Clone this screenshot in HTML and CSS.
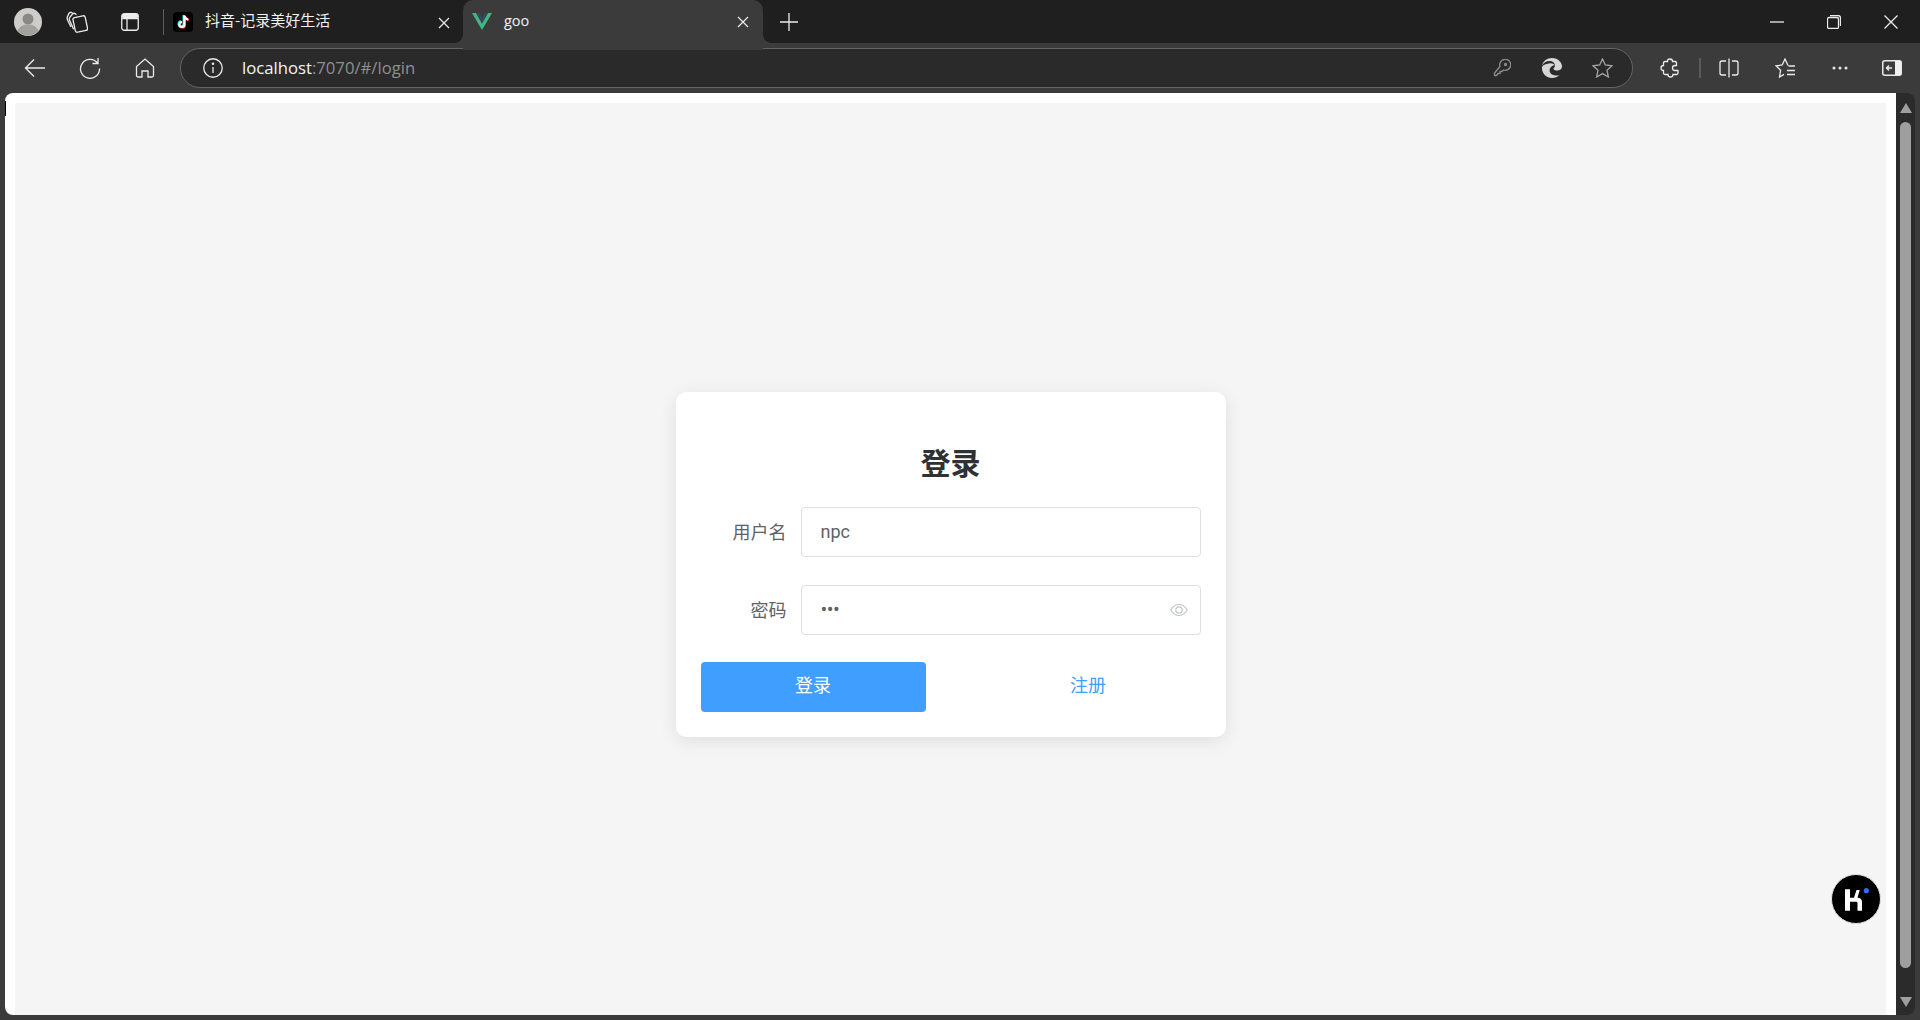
FILE: index.html
```html
<!DOCTYPE html>
<html lang="zh-CN">
<head>
<meta charset="utf-8">
<title>goo</title>
<link rel="stylesheet" href="styles.css">
</head>
<body>
<div class="browser">
  <header class="tabstrip">
    <div class="slot slot-avatar">
      <svg width="28" height="28" viewBox="0 0 28 28"><circle cx="14" cy="14" r="14" fill="#cfcdca"/><circle cx="14" cy="11" r="5.5" fill="#8b8985"/><path d="M3.5 23c2-5 6-6.5 10.500-6.500s8.500 1.500 10.500 6.500a14 14 0 0 1-21 0z" fill="#a3a19d"/></svg>
    </div>
    <div class="slot slot-coll">
      <svg class="ico" width="22" height="22" viewBox="0 0 22 22"><rect x="8" y="5.500" width="12.500" height="15" rx="2" transform="rotate(-12 14.300 13)"/><path d="M10.500 3.800 9.300 2.800C8.300 2 7.200 2.200 6.500 3L3.800 6.300c-.8 1-.8 2-.2 3l4 9"/><path d="M6.500 1.800 5.300 1.400C4.300 1.100 3.500 1.500 3 2.400L1.300 6c-.4 1-.3 2 .2 3l3.500 7"/></svg>
    </div>
    <div class="slot slot-tabs">
      <svg class="ico" width="18" height="18" viewBox="0 0 18 18"><rect x=".75" y=".75" width="16.500" height="16.500" rx="2.500"/><path d="M6 6v11M1 5.500h16" /><rect x="1" y="1" width="16" height="4" rx="1.500" class="fillw"/></svg>
    </div>
    <div class="tab-sep"></div>
    <div class="tab">
      <svg class="favicon" width="20" height="20" viewBox="0 0 20 20"><rect width="20" height="20" rx="4" fill="#000"/><path d="M11.400 3.500v9a2.500 2.500 0 1 1-2.500-2.500" fill="none" stroke="#25f4ee" stroke-width="2.300" transform="translate(-.7 -.5)"/><path d="M11.400 3.500v9a2.500 2.500 0 1 1-2.500-2.500M11.400 3.700c.3 2.200 1.700 3.500 3.800 3.700" fill="none" stroke="#fe2c55" stroke-width="2.300" transform="translate(.6 .5)"/><path d="M11.400 3.500v9a2.500 2.500 0 1 1-2.500-2.500M11.400 3.700c.3 2.200 1.700 3.500 3.800 3.700" fill="none" stroke="#fff" stroke-width="2.100"/></svg>
      <span class="tab-title">抖音-记录美好生活</span>
      <svg class="tab-close" width="12" height="12" viewBox="0 0 12 12"><path d="M1 1l10 10M11 1 1 11"/></svg>
    </div>
    <div class="tab tab-active">
      <svg class="favicon" width="20" height="17" viewBox="0 0 20 17"><path d="M0 0h4l6 10.500L16 0h4L10 17z" fill="#41b883"/><path d="M4 0h3.300L10 4.700 12.700 0H16l-6 10.500z" fill="#34495e"/></svg>
      <span class="tab-title tab-title-latin">goo</span>
      <svg class="tab-close" width="12" height="12" viewBox="0 0 12 12"><path d="M1 1l10 10M11 1 1 11"/></svg>
    </div>
    <div class="slot slot-plus">
      <svg class="ico" width="18" height="18" viewBox="0 0 18 18"><path d="M9 0v18M0 9h18"/></svg>
    </div>
    <div class="spacer"></div>
    <div class="slot slot-win"><svg class="ico" width="14" height="2" viewBox="0 0 14 2"><path d="M0 1h14"/></svg></div>
    <div class="slot slot-win"><svg class="ico" width="14" height="14" viewBox="0 0 14 14"><rect x=".5" y="2.500" width="11" height="11" rx="1.500"/><path d="M3 .5h8a2.500 2.500 0 0 1 2.500 2.500v8"/></svg></div>
    <div class="slot slot-win slot-win-last"><svg class="ico" width="14" height="14" viewBox="0 0 14 14"><path d="M.5.5l13 13M13.500.5l-13 13"/></svg></div>
  </header>

  <nav class="toolbar">
    <div class="slot slot-nav"><svg class="ico" width="22" height="20" viewBox="0 0 22 20"><path d="M21 10H1.500M10 1.500 1.500 10l8.500 8.500"/></svg></div>
    <div class="slot slot-nav"><svg class="ico" width="22" height="22" viewBox="0 0 22 22"><path d="M18.500 6A9.500 9.500 0 1 0 20.500 11.500M19 1v5.500h-5.500"/></svg></div>
    <div class="slot slot-nav"><svg class="ico" width="20" height="20" viewBox="0 0 20 20"><path d="M7 19H3a1.500 1.500 0 0 1-1.500-1.500V8.500L10 1l8.500 7.500v9A1.500 1.500 0 0 1 17 19h-4v-6H7z"/></svg></div>
    <div class="address">
      <div class="slot slot-info"><svg class="ico" width="20" height="20" viewBox="0 0 20 20"><circle cx="10" cy="10" r="9.250"/><path d="M10 9v6"/><circle cx="10" cy="5.800" r=".6"/></svg></div>
      <div class="url"><span class="url-host">localhost</span>:7070/#/login</div>
      <div class="spacer"></div>
      <div class="slot slot-addr"><svg class="ico ico-dim" width="18" height="18" viewBox="0 0 18 18"><path d="M7 7.500a5.500 5.500 0 1 1 3.500 3.500L9 12.500H7V14.500H5L3.500 16.500H1.500V14z"/><circle cx="12.500" cy="5.500" r="1"/></svg></div>
      <div class="slot slot-addr"><svg width="22" height="22" viewBox="0 0 22 22"><path d="M11 1c5 0 9.500 3.500 10 8 .3 3-2.300 4.500-5 4.500-2 0-3.500-.8-3.500-1.800 0-1 1.500-1.200 1.500-3C14 6 11.500 4 8.500 4 5 4 2.500 5.800 1 8.500 2 4 6 1 11 1z" fill="#d6d6d6"/><path d="M1 10c-.6 6.500 4.500 11 10 11 3 0 5.500-1 7.500-3-2 .8-5 1-7.500-.5-3-1.800-3-5.500-1-7.500 1.500-1.500 3-2 4-1.600C12.800 7 10.500 6 8 6.500 4.500 7 1.500 8 1 10z" fill="#d6d6d6"/></svg></div>
      <div class="slot slot-addr"><svg class="ico ico-dim2" width="21" height="20" viewBox="0 0 21 20"><path d="M10.500 1l2.800 6 6.700.8-5 4.500 1.400 6.700-5.900-3.400-5.900 3.400 1.400-6.700-5-4.500 6.700-.8z"/></svg></div>
    </div>
    <div class="slot slot-tool slot-ext"><svg class="ico" width="20" height="20" viewBox="0 0 20 20"><path d="M7.500 3.500C7.500 1.800 8.700 1 10 1s2.500.8 2.500 2.500H15A1.500 1.500 0 0 1 16.500 5v2.500H15a2.500 2.500 0 0 0 0 5h3V15a1.500 1.500 0 0 1-1.500 1.500H13c0 1.700-1.200 2.500-2.500 2.500S8 18.200 8 16.500H5A1.500 1.500 0 0 1 3.500 15v-2.500C1.800 12.500 1 11.300 1 10s.8-2.500 2.500-2.500V5A1.500 1.500 0 0 1 5 3.500z"/></svg></div>
    <div class="tool-sep"></div>
    <div class="slot slot-tool slot-split"><svg class="ico" width="20" height="20" viewBox="0 0 20 20"><path d="M7 3H3a2 2 0 0 0-2 2v10a2 2 0 0 0 2 2h4M13 3h4a2 2 0 0 1 2 2v10a2 2 0 0 1-2 2h-4M10 .5v19"/></svg></div>
    <div class="slot slot-tool slot-fav"><svg class="ico" width="21" height="20" viewBox="0 0 21 20"><path d="M13 7.500 10 1 7.200 7 1 7.800l4.600 4.500L4.500 19l4.500-2.600M13.500 8H20M12 12.500h8M12 16.500h8"/></svg></div>
    <div class="slot slot-tool slot-more"><svg width="16" height="4" viewBox="0 0 16 4"><circle cx="2" cy="2" r="1.500" fill="#e8e8e8"/><circle cx="8" cy="2" r="1.500" fill="#e8e8e8"/><circle cx="14" cy="2" r="1.500" fill="#e8e8e8"/></svg></div>
    <div class="slot slot-tool slot-side"><svg width="20" height="16" viewBox="0 0 20 16"><rect x=".75" y=".75" width="18.500" height="14.500" rx="2" fill="none" stroke="#e8e8e8" stroke-width="1.500"/><path d="M13 1h5a1 1 0 0 1 1 1v12a1 1 0 0 1-1 1h-5z" fill="#f0f0f0"/><path d="M10 8H4.500M7 5.500 4.500 8 7 10.500" fill="none" stroke="#f0f0f0" stroke-width="1.400"/></svg></div>
  </nav>

  <div class="viewport-row">
    <div class="viewport">
      <main class="page">
        <section class="card">
          <h1 class="title">登录</h1>
          <form class="form">
            <div class="row">
              <label class="label">用户名</label>
              <div class="input"><span class="value">npc</span></div>
            </div>
            <div class="row">
              <label class="label">密码</label>
              <div class="input">
                <span class="value value-pw">•••</span>
                <svg class="eye" width="18" height="14" viewBox="0 0 18 14"><path d="M.7 7C3 3.300 5.800 1.500 9 1.500s6 1.800 8.300 5.500C15 10.700 12.200 12.500 9 12.500S3 10.700.7 7z"/><circle cx="9" cy="7" r="3.200"/></svg>
              </div>
            </div>
            <div class="actions">
              <button class="btn btn-primary" type="button">登录</button>
              <button class="btn btn-link" type="button">注册</button>
            </div>
          </form>
        </section>
      </main>
    </div>
    <aside class="scrollbar">
      <span class="arrow arrow-up"></span>
      <span class="thumb"></span>
      <span class="arrow arrow-down"></span>
    </aside>
    <span class="caret"></span>
    <div class="float-badge">
      <svg width="26" height="26" viewBox="0 0 26 26"><path d="M2 3.300h5v8.400h4L13.500 4h3.200L14.500 11.700c2.500 0 4.500 1.300 4.500 4v9h-4.500v-7.500c0-1.200-.5-1.500-1.500-1.500H7v9H2z" fill="#fff"/><circle cx="23.300" cy="4.700" r="2.600" fill="#2f6bff"/></svg>
    </div>
  </div>
</div>
</body>
</html>
```

FILE: styles.css
```css
* { box-sizing: border-box; }
html, body { margin: 0; height: 100%; }
body {
  background: #3b3b3b;
  font-family: "Open Sans", "Noto Sans CJK SC", sans-serif;
  overflow: hidden;
}
.browser { display: flex; flex-direction: column; height: 1020px; }
.spacer { flex: 1; }
.slot { display: flex; align-items: center; justify-content: center; flex: none; }
.ico { fill: none; stroke: #ececec; stroke-width: 1.300; }
.ico .fillw { fill: #ececec; stroke: none; }
.ico-dim { stroke: #8e8e8e; }
.ico-dim2 { stroke: #a5a5a5; }

/* tab strip */
.tabstrip { display: flex; height: 43px; background: #1f1f1f; flex: none; }
.slot-avatar { width: 56px; }
.slot-coll { width: 42px; }
.slot-tabs { width: 64px; }
.tab-sep { width: 1px; height: 26px; margin: 9px 1px 0 1px; background: #5d5d5d; }
.tab {
  display: flex; align-items: center; width: 298px; height: 43px;
  padding: 0 13px 0 8px; color: #f2f2f2;
}
.favicon { flex: none; }
.tab-title {
  flex: 1; margin-left: 12px; margin-bottom: 5px; font-size: 15px;
  font-family: "Noto Sans CJK SC", sans-serif; white-space: nowrap;
}
.tab-title-latin { font-family: "Open Sans", sans-serif; font-size: 14.500px; margin-bottom: 0; }
.tab-close { flex: none; fill: none; stroke: #ededed; stroke-width: 1.200; }
.tab-active {
  position: relative; z-index: 1;
  width: 300px; height: 50px; padding: 0 14px 0 9px;
  background: #3b3b3b; border-radius: 10px 10px 0 0;
  align-items: flex-start;
}
.tab-active::before, .tab-active::after {
  content: ""; position: absolute; bottom: 7px; width: 8px; height: 8px;
}
.tab-active::before { left: -8px; background: radial-gradient(circle at 0 0, transparent 7.500px, #3b3b3b 8px); }
.tab-active::after { right: -8px; background: radial-gradient(circle at 100% 0, transparent 7.500px, #3b3b3b 8px); }
.tab-active .favicon { margin-top: 13px; }
.tab-active .tab-title { margin-top: 11px; line-height: 20px; }
.tab-active .tab-close { margin-top: 16px; }
.tabstrip > .tab:not(.tab-active) .tab-close { margin-top: 2px; }
.slot-plus { width: 52px; }
.slot-win { width: 57px; }
.slot-win-last { width: 58px; }

/* toolbar */
.toolbar { display: flex; align-items: center; height: 50px; padding-left: 7px; flex: none; background: #3b3b3b; }
.slot-nav { width: 55px; height: 40px; }
.address {
  display: flex; align-items: center; width: 1453px; height: 40px; margin-left: 8px;
  background: #2a2a2a; border: 1px solid #646464; border-radius: 20px; padding-right: 5px;
}
.slot-info { width: 62px; margin-right: -1px; padding-left: 2px; height: 38px; }
.url { font-size: 16.700px; margin-bottom: 2px; color: #8f8f8f; white-space: nowrap; }
.url-host { color: #f5f5f5; }
.slot-addr { width: 50px; height: 38px; }
.slot-tool { width: 48px; height: 40px; }
.slot-ext { margin-left: 13px; }
.tool-sep { width: 2px; height: 20px; margin-left: 5px; background: #5a5a5a; }
.slot-split { margin-left: 4px; }
.slot-fav { margin-left: 8px; }
.slot-more { margin-left: 7px; }
.slot-side { margin-left: 4px; }

/* viewport */
.viewport-row { display: flex; flex: 1; position: relative; padding: 0 5px 5px; min-height: 0; }
.viewport { flex: 1; background: #fff; border-radius: 8px 0 0 8px; padding: 10px 10px 0; min-width: 0; }
.page {
  display: flex; align-items: center; justify-content: center;
  height: 100%; padding-top: 11px; background: #f5f5f5;
}
.caret { position: absolute; left: 5px; top: 8px; width: 1px; height: 15px; background: #000; }

/* card */
.card {
  width: 550px; height: 345px; padding: 44px 25px 25px;
  background: #fff; border-radius: 10px;
  box-shadow: 0 4px 18px rgba(0, 0, 0, .09);
  font-family: "Roboto", "Noto Sans CJK SC", sans-serif;
}
.title {
  margin: 0 0 21px; font-size: 30px; line-height: 50px; font-weight: 700;
  text-align: center; color: #303133;
  font-family: "Noto Sans CJK SC", sans-serif;
}
.form { display: flex; flex-direction: column; }
.row { display: flex; align-items: center; height: 50px; margin-bottom: 28px; }
.row + .row { margin-bottom: 27px; }
.label { width: 100px; padding: 0 14px 2px 0; text-align: right; font-size: 18px; color: #606266; flex: none; }
.input {
  display: flex; align-items: center; justify-content: space-between;
  flex: 1; height: 50px; padding: 0 12px 0 19px;
  border: 1px solid #dcdfe6; border-radius: 4px; background: #fff;
  font-size: 18px; color: #606266;
}
.value { padding-bottom: 2px; }
.value-pw { font-size: 20px; letter-spacing: -.5px; }
.eye { fill: none; stroke: #c0c4cc; stroke-width: 1.200; }
.actions { display: flex; justify-content: space-between; }
.btn {
  width: 225px; height: 50px; border: 0; border-radius: 4px; padding: 0 0 6px;
  font: 18px "Roboto", "Noto Sans CJK SC", sans-serif;
}
.btn-primary { background: #409eff; color: #fff; }
.btn-link { background: transparent; color: #409eff; }

/* scrollbar */
.scrollbar {
  display: flex; flex-direction: column; align-items: center;
  width: 19px; background: #2b2b2b; border-radius: 0 8px 8px 0; padding: 10px 0 8px;
  flex: none;
}
.arrow { width: 0; height: 0; border-left: 6px solid transparent; border-right: 6px solid transparent; flex: none; }
.arrow-up { border-bottom: 10px solid #9f9f9f; }
.arrow-down { border-top: 10px solid #9f9f9f; }
.thumb { flex: 1; width: 11px; margin: 9px 0 29px; border-radius: 6px; background: #9f9f9f; }

/* floating badge */
.float-badge {
  position: absolute; left: 1831px; top: 781px; width: 50px; height: 50px;
  display: flex; align-items: center; justify-content: center;
  border-radius: 50%; background: #000; border: 1px solid #e4e4e4;
}
```
